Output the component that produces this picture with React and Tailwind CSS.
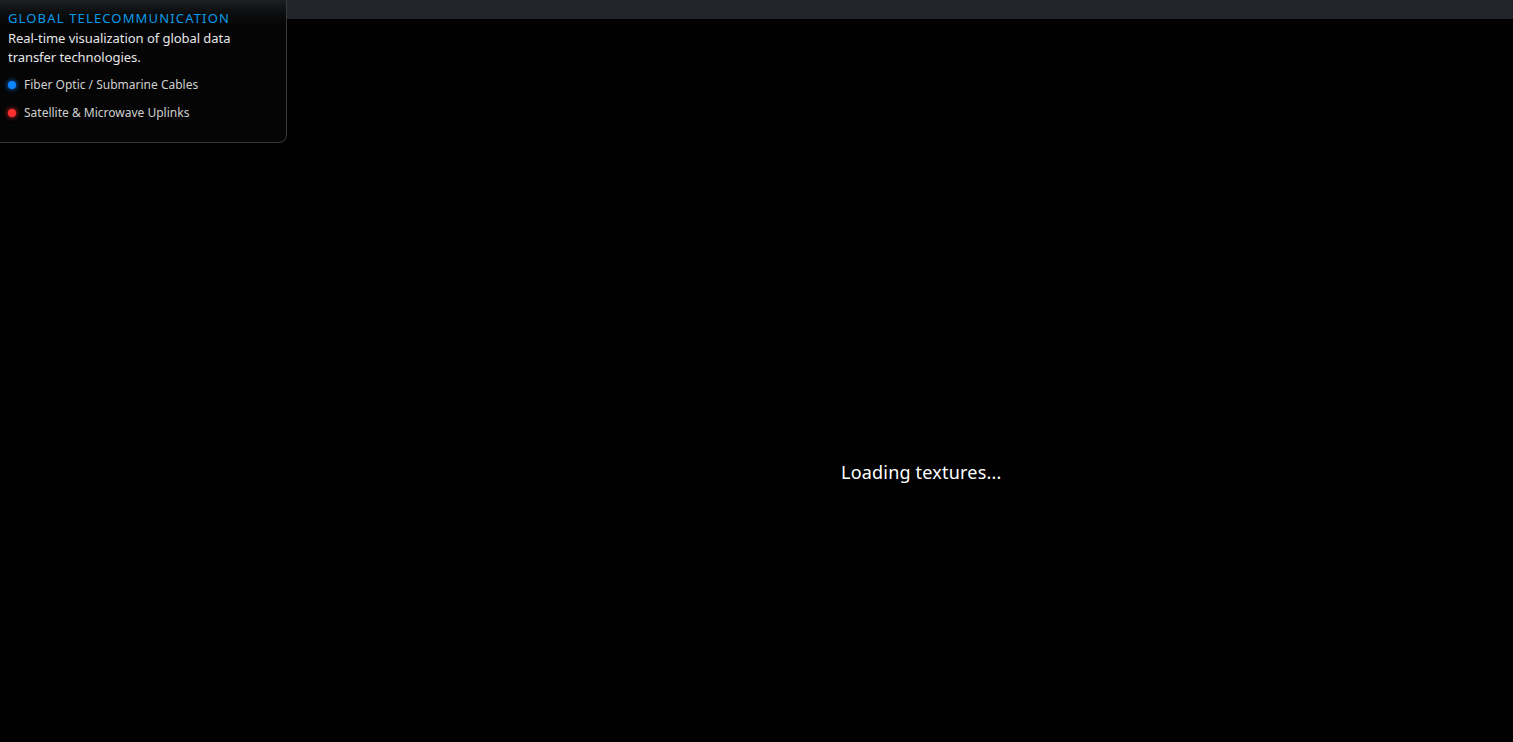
import React from "react";

export default function App() {
  return (
    <div
      className="relative w-[1513px] h-[742px] bg-black overflow-hidden flex flex-col"
      style={{ fontFamily: '"Noto Sans", "Open Sans", sans-serif' }}
    >
      <div className="h-[19px] bg-[#212429] shrink-0" />
      <div className="flex-1 bg-black" />

      <div className="absolute left-[841px] top-[459px] text-[18px] leading-[26px] text-white tracking-[0.2px]">
        Loading textures...
      </div>

      <div className="absolute -left-[1px] -top-[1px] w-[288px] h-[144px] rounded-br-[8px] border border-[#3a3a3a] bg-[linear-gradient(to_bottom,#1d1f22_0px,#0d0e10_12px,#050506_26px,#050505_100%)] pl-[8px] pt-[10px]">
        <div className="text-[13px] leading-[17px] tracking-[1.15px] text-[#0a9be8]">
          GLOBAL TELECOMMUNICATION
        </div>
        <div className="mt-[2px] text-[13px] leading-[19px] text-[#e6e6e6] w-[245px] tracking-[-0.05px]">
          Real-time visualization of global data transfer technologies.
        </div>
        <div className="mt-[9px] flex flex-col gap-[10px]">
          <div className="flex items-center gap-[8px] text-[12px] leading-[18px] text-[#cfcfcf]">
            <span className="w-[8px] h-[8px] rounded-full bg-[#0a84ff] shadow-[0_0_5px_#0a84ff]" />
            Fiber Optic / Submarine Cables
          </div>
          <div className="flex items-center gap-[8px] text-[12px] leading-[18px] text-[#cfcfcf]">
            <span className="w-[8px] h-[8px] rounded-full bg-[#ff3030] shadow-[0_0_5px_#ff3030]" />
            Satellite &amp; Microwave Uplinks
          </div>
        </div>
      </div>
    </div>
  );
}
